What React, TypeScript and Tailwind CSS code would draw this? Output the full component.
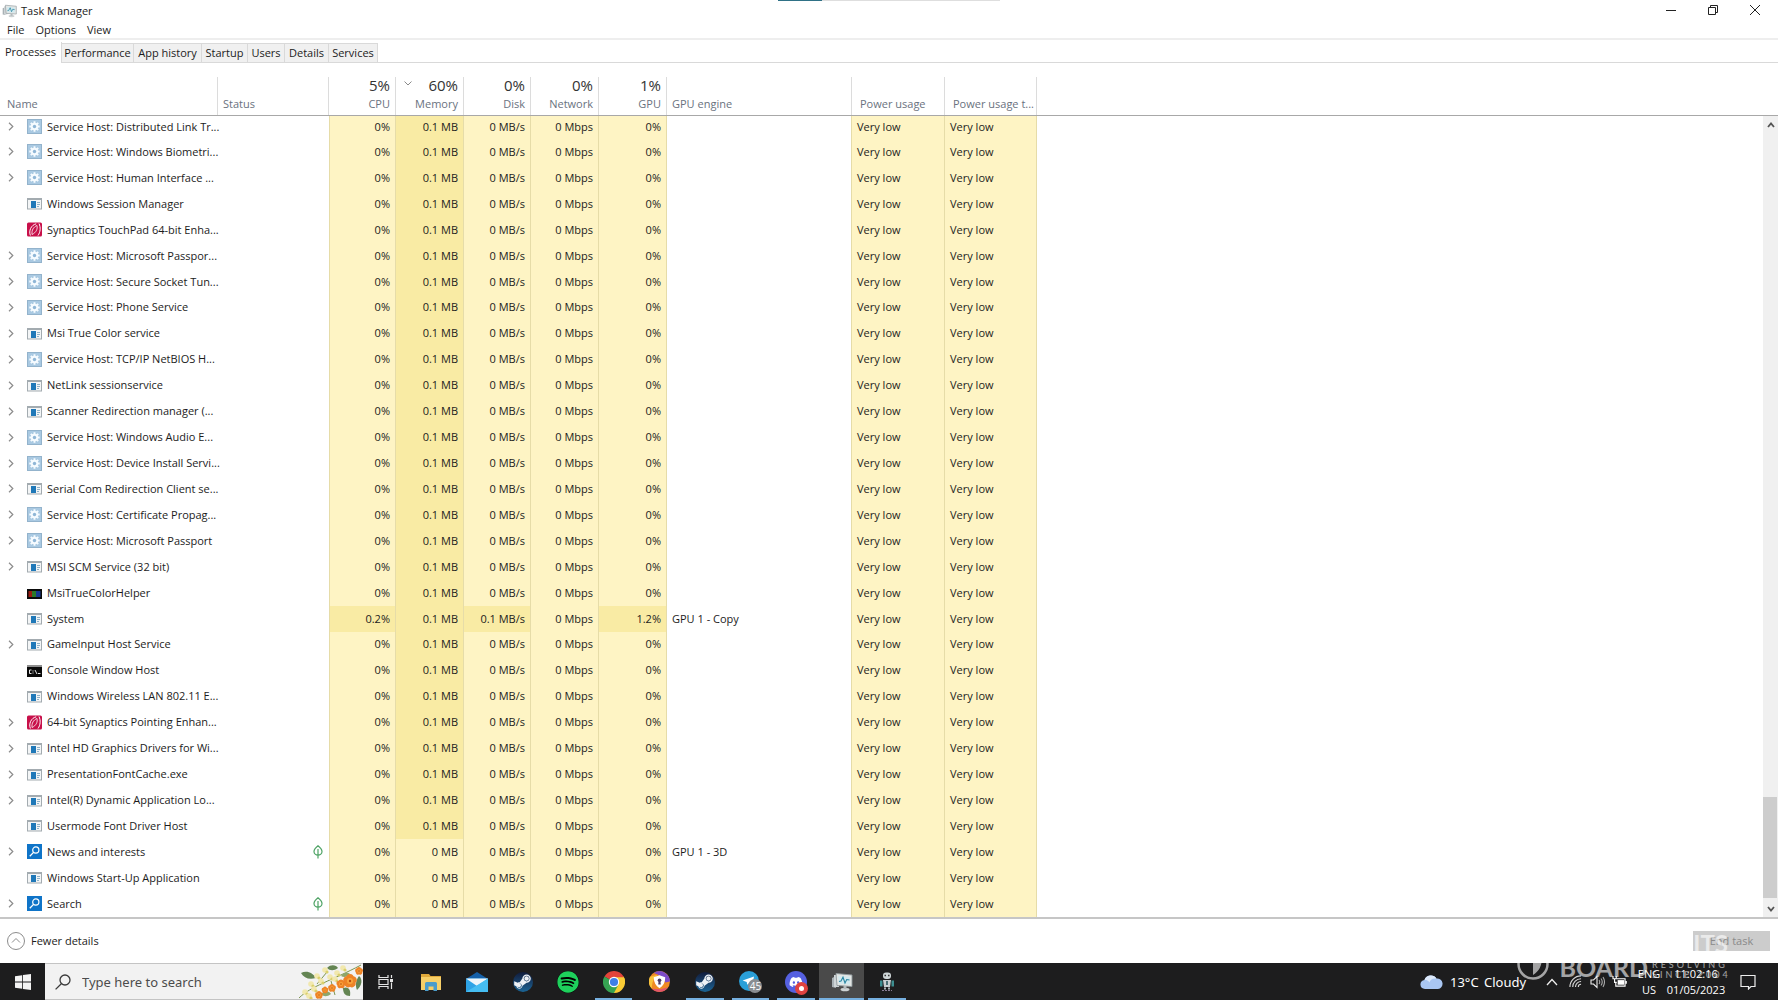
import React from 'react';
import { FaSpotify, FaSteamSymbol, FaDiscord } from 'react-icons/fa';

type IconKind = 'gear' | 'app' | 'syn' | 'rgb' | 'cmd' | 'search';

interface Proc {
  name: string;
  icon: IconKind;
  expand?: boolean;
  leaf?: boolean;
  cpu?: string;
  mem?: string;
  disk?: string;
  gpu?: string;
  engine?: string;
}

const processes: Proc[] = [
  { name: 'Service Host: Distributed Link Tr...', icon: 'gear', expand: true },
  { name: 'Service Host: Windows Biometri...', icon: 'gear', expand: true },
  { name: 'Service Host: Human Interface ...', icon: 'gear', expand: true },
  { name: 'Windows Session Manager', icon: 'app' },
  { name: 'Synaptics TouchPad 64-bit Enha...', icon: 'syn' },
  { name: 'Service Host: Microsoft Passpor...', icon: 'gear', expand: true },
  { name: 'Service Host: Secure Socket Tun...', icon: 'gear', expand: true },
  { name: 'Service Host: Phone Service', icon: 'gear', expand: true },
  { name: 'Msi True Color service', icon: 'app', expand: true },
  { name: 'Service Host: TCP/IP NetBIOS H...', icon: 'gear', expand: true },
  { name: 'NetLink sessionservice', icon: 'app', expand: true },
  { name: 'Scanner Redirection manager (...', icon: 'app', expand: true },
  { name: 'Service Host: Windows Audio E...', icon: 'gear', expand: true },
  { name: 'Service Host: Device Install Servi...', icon: 'gear', expand: true },
  { name: 'Serial Com Redirection Client se...', icon: 'app', expand: true },
  { name: 'Service Host: Certificate Propag...', icon: 'gear', expand: true },
  { name: 'Service Host: Microsoft Passport', icon: 'gear', expand: true },
  { name: 'MSI SCM Service (32 bit)', icon: 'app', expand: true },
  { name: 'MsiTrueColorHelper', icon: 'rgb' },
  { name: 'System', icon: 'app', cpu: '0.2%', disk: '0.1 MB/s', gpu: '1.2%', engine: 'GPU 1 - Copy' },
  { name: 'GameInput Host Service', icon: 'app', expand: true },
  { name: 'Console Window Host', icon: 'cmd' },
  { name: 'Windows Wireless LAN 802.11 E...', icon: 'app' },
  { name: '64-bit Synaptics Pointing Enhan...', icon: 'syn', expand: true },
  { name: 'Intel HD Graphics Drivers for Wi...', icon: 'app', expand: true },
  { name: 'PresentationFontCache.exe', icon: 'app', expand: true },
  { name: 'Intel(R) Dynamic Application Lo...', icon: 'app', expand: true },
  { name: 'Usermode Font Driver Host', icon: 'app' },
  { name: 'News and interests', icon: 'search', expand: true, leaf: true, mem: '0 MB', engine: 'GPU 1 - 3D' },
  { name: 'Windows Start-Up Application', icon: 'app', mem: '0 MB' },
  { name: 'Search', icon: 'search', expand: true, leaf: true, mem: '0 MB' },
];

function ProcIcon({ kind }: { kind: IconKind }) {
  return (
    <svg viewBox="0 0 15 15" className="size-[15px] shrink-0" aria-hidden="true">
      {kind === 'gear' && (
        <>
          <rect x="0.5" y="0.5" width="14" height="14" fill="#a9c9e2" stroke="#93b3cc" />
          <path d="M7.5 2.300v10.400M2.300 7.500h10.400M3.800 3.800l7.400 7.400M11.200 3.800l-7.400 7.400" stroke="#f6fbff" strokeWidth="1.900" />
          <circle cx="7.5" cy="7.5" r="3.700" fill="#f6fbff" />
          <circle cx="7.5" cy="7.5" r="1.700" fill="#8fb6d6" />
        </>
      )}
      {kind === 'app' && (
        <>
          <rect x="0.5" y="2.5" width="14" height="10.5" fill="#f3f5f6" stroke="#a3abb0" />
          <rect x="0" y="2" width="15" height="2" fill="#a3abb0" />
          <rect x="4" y="5" width="5" height="7" fill="#1f78b8" />
          <path d="M10 6.5h3M10 8.5h3M10 10.5h2" stroke="#8eb2c8" />
        </>
      )}
      {kind === 'syn' && (
        <>
          <rect x="0" y="0.5" width="15" height="14" rx="1.5" fill="#c8104a" />
          <path d="M3.400 13.500C1.500 9 4 3 9.200 1.800" fill="none" stroke="#fff" strokeWidth="1" />
          <path d="M5 12.500C4.600 8 6.500 5 10 3.500c.8 3.500-.8 7-5 9z" fill="none" stroke="#fff" strokeWidth="0.800" />
          <path d="M12 1.500c1.800 4 1.500 8.500-1 12" fill="none" stroke="#fff" strokeWidth="1" />
        </>
      )}
      {kind === 'rgb' && (
        <>
          <rect x="0" y="4" width="15" height="10" fill="#0a0a0a" />
          <rect x="1.5" y="6" width="3.5" height="6" fill="#9a1c12" />
          <rect x="5" y="6" width="4" height="6" fill="#2c7a28" />
          <rect x="9" y="6" width="4.5" height="6" fill="#17398f" />
        </>
      )}
      {kind === 'cmd' && (
        <>
          <rect x="0" y="2" width="15" height="12" fill="#0a0a0a" />
          <rect x="0" y="2" width="15" height="2" fill="#8f8f8f" />
          <path d="M4.500 7h-2v3.500h2M6 7.500v1M6 9.500v1M8 7l2 4M11 10.500h2.500" fill="none" stroke="#fff" strokeWidth="0.9" />
        </>
      )}
      {kind === 'search' && (
        <>
          <rect width="15" height="15" fill="#0f74c8" />
          <circle cx="8.8" cy="6" r="3.1" fill="none" stroke="#fff" strokeWidth="1.2" />
          <path d="M6.500 8.400 2.800 12.200" stroke="#fff" strokeWidth="1.3" />
        </>
      )}
    </svg>
  );
}

function Leaf() {
  return (
    <svg viewBox="0 0 10 14" className="h-[14px] w-[10px]" fill="none" stroke="#4ea365" strokeWidth="1.2" role="img" aria-label="Suspended">
      <path d="M5 .8C2.500 2.800 1 4.600 1 6.600a4 3.600 0 0 0 8 0C9 4.600 7.500 2.800 5 .8zM5 4v9.500" />
    </svg>
  );
}

function MonitorIcon({ className }: { className: string }) {
  return (
    <svg viewBox="0 0 22 20" className={className} aria-hidden="true">
      <path d="M1 6l4-2v12l-4-1z" fill="#a9b1b5" />
      <path d="M3 3h5v12H3z" fill="#cfd5d7" />
      <path d="M5 1.500 21 3v11.500L6 13.500z" fill="#e3e6e4" stroke="#8d979b" strokeWidth="0.9" />
      <path d="M7 4l12 .8v7.700L7.800 11.800z" fill="#d3e9ee" />
      <path d="M8 9.500 10 9l2-3.800 2 5.800 1.700-3.500 2.800.5" fill="none" stroke="#2a86a2" strokeWidth="1.1" />
      <ellipse cx="14" cy="17.5" rx="4.5" ry="1.8" fill="#cdd2d3" />
      <path d="M12.500 14h3v3h-3z" fill="#b3babc" />
    </svg>
  );
}

const tabs = [
  ['Performance', 'w-[72px]'],
  ['App history', 'w-[68px]'],
  ['Startup', 'w-[46px]'],
  ['Users', 'w-[37px]'],
  ['Details', 'w-[44px]'],
  ['Services', 'w-[49px]'],
];

const usage = [
  ['5%', 'CPU'],
  ['60%', 'Memory'],
  ['0%', 'Disk'],
  ['0%', 'Network'],
  ['1%', 'GPU'],
];

const th = 'p-0 align-bottom font-normal text-[#6a7280]';
const thInner = 'mt-[14px] flex h-[38px] flex-col justify-end border-r border-[#dcdcdc] pb-[3px]';
const num = 'border-r border-[#e6dca8] p-0 pr-[5px] text-right';
const pale = 'bg-[#fef4c4]';
const warm = 'bg-[#f9eba4]';

function ProcessTable() {
  return (
    <table className="h-full w-full table-fixed border-separate border-spacing-0 text-[11px] leading-4">
      <colgroup>
        <col className="w-[218px]" />
        <col className="w-[111px]" />
        <col className="w-[67px]" />
        <col className="w-[68px]" />
        <col className="w-[67px]" />
        <col className="w-[68px]" />
        <col className="w-[68px]" />
        <col className="w-[185px]" />
        <col className="w-[93px]" />
        <col className="w-[92px]" />
        <col />
      </colgroup>
      <thead>
        <tr className="h-[53px]">
          <th className={`${th} border-b border-[#a8a8a8] text-left`}>
            <div className={`${thInner} pl-[7px]`}>Name</div>
          </th>
          <th className={`${th} border-b border-[#a8a8a8] text-left`}>
            <div className={`${thInner} pl-[5px]`}>Status</div>
          </th>
          {usage.map(([value, label]) => (
            <th key={label} className={`${th} border-b border-[#a8a8a8] text-right`}>
              <div className={`${thInner} relative pr-[5px]`}>
                {label === 'Memory' && (
                  <svg viewBox="0 0 8 5" className="absolute top-[4px] left-[8px] h-[5px] w-[8px]" fill="none" stroke="#8a8a8a" aria-hidden="true">
                    <path d="M.5.5 4 4 7.500.5" />
                  </svg>
                )}
                <span className="mb-px text-[15px] leading-5 text-[#333]">{value}</span>
                <span>{label}</span>
              </div>
            </th>
          ))}
          <th className={`${th} border-b border-[#a8a8a8] text-left`}>
            <div className={`${thInner} pl-[5px]`}>GPU engine</div>
          </th>
          <th className={`${th} border-b border-[#a8a8a8] text-left`}>
            <div className={`${thInner} pl-[8px]`}>Power usage</div>
          </th>
          <th className={`${th} border-b border-[#a8a8a8] text-left`}>
            <div className={`${thInner} whitespace-nowrap pl-[8px]`}>Power usage t...</div>
          </th>
          <td className="border-b border-[#a8a8a8] p-0" />
        </tr>
      </thead>
      <tbody className="text-[#1c1c1c]">
        {processes.map((p, i) => (
          <tr key={p.name} className={i === 0 ? 'h-[23px] [&>td]:pb-[2px]' : ''}>
            <td className="p-0">
              <div className="flex items-center whitespace-nowrap">
                <span className="flex w-[27px] shrink-0 pl-[8px]">
                  {p.expand && (
                    <button type="button" aria-label={`Expand ${p.name}`} className="block">
                      <svg viewBox="0 0 6 9" className="h-[9px] w-[6px]" fill="none" stroke="#8c8c8c" strokeWidth="1.2" aria-hidden="true">
                        <path d="M1 .8 4.800 4.500 1 8.200" />
                      </svg>
                    </button>
                  )}
                </span>
                <ProcIcon kind={p.icon} />
                <span className="ml-[5px]">{p.name}</span>
              </div>
            </td>
            <td className="p-0">
              {p.leaf && (
                <div className="flex justify-end pr-[6px]">
                  <Leaf />
                </div>
              )}
            </td>
            <td className={`${num} border-l ${p.cpu ? warm : pale}`}>{p.cpu ?? '0%'}</td>
            <td className={`${num} ${p.mem ? pale : warm}`}>{p.mem ?? '0.1 MB'}</td>
            <td className={`${num} ${p.disk ? warm : pale}`}>{p.disk ?? '0 MB/s'}</td>
            <td className={`${num} ${pale}`}>0 Mbps</td>
            <td className={`${num} ${p.gpu ? warm : pale}`}>{p.gpu ?? '0%'}</td>
            <td className="border-r border-[#e6dca8] p-0 pl-[5px]">{p.engine}</td>
            <td className={`border-r border-[#e6dca8] p-0 pl-[5px] ${pale}`}>Very low</td>
            <td className={`border-r border-[#e6dca8] p-0 pl-[5px] ${pale}`}>Very low</td>
            <td className="p-0" />
          </tr>
        ))}
      </tbody>
    </table>
  );
}

function Flowers() {
  const orange = [[53, 17, 6], [62, 7, 3.5], [35, 24, 3.5], [44, 20, 4], [22, 31, 3.5], [28, 26, 3]];
  const cream = [[20, 12], [28, 6], [14, 20], [24, 17], [33, 13], [8, 28], [40, 9], [46, 4], [17, 25], [38, 15], [12, 32]];
  return (
    <svg viewBox="0 0 66 35" className="h-full w-[66px]" aria-hidden="true">
      <path d="M2 34C14 22 34 17 64 1M20 20l10-12M34 17l4 14" stroke="#7d9650" fill="none" />
      <path d="M4 9c6-3 12 0 15 5C12 16 7 14 4 9zM46 24c6-2 8 2 7 8-5 0-7-3-7-8zM62 12c4 3 3 10-2 14-2-5-1-10 2-14zM30 4c4-4 9-3 11 0-4 3-8 3-11 0z" fill="#648553" />
      <path d="M24 30c4-4 8-3 10 0-4 3-7 3-10 0zM44 12c3-4 7-4 9-2-2 3-6 4-9 2z" fill="#8ea66c" />
      {cream.map(([x, y], i) => (
        <g key={i}>
          <circle cx={x} cy={y} r="2.8" fill="#f1e8ae" />
          <circle cx={x + 2} cy={y + 2} r="1.6" fill="#d9cf6c" />
        </g>
      ))}
      {orange.map(([x, y, r], i) => (
        <g key={i}>
          {[0, 72, 144, 216, 288].map((a) => (
            <circle key={a} cx={x} cy={y - r * 0.55} r={r * 0.6} fill="#ee8326" transform={`rotate(${a} ${x} ${y})`} />
          ))}
          <circle cx={x} cy={y} r={r * 0.5} fill="#f9a53c" />
          <circle cx={x} cy={y} r={r * 0.2} fill="#b8470d" />
        </g>
      ))}
    </svg>
  );
}

function Steam() {
  return (
    <span className="flex size-[20px] items-center justify-center rounded-full bg-linear-to-b from-[#101c3c] to-[#1a6596]">
      <FaSteamSymbol className="size-[19px] text-[#eef2f6]" />
    </span>
  );
}

const taskIcons: { label: string; line?: boolean; active?: boolean; icon: React.ReactNode }[] = [
  {
    label: 'Task View',
    icon: (
      <svg viewBox="0 0 16 14" className="h-[14px] w-[16px]" fill="none" stroke="#e4e4e4" strokeWidth="1.2">
        <path d="M1 0v2.500h9V0M1 14v-2.500h9V14M1 4.500h9v5H1zM13.500 0v3M13.500 7.500V14" />
        <path d="M12 4h3v3h-3z" fill="#e4e4e4" stroke="none" />
      </svg>
    ),
  },
  {
    label: 'File Explorer',
    icon: (
      <svg viewBox="0 0 20 18" className="h-[18px] w-[20px]">
        <path d="M0 1h8l1.500 2H20v14H0z" fill="#e0a93b" />
        <path d="M0 4h20v13H0z" fill="#f6cf68" />
        <path d="M4 18v-7.500q0-1.500 1.500-1.500h9q1.500 0 1.500 1.500V18h-3.500v-4.500h-5V18z" fill="#4a9ccb" />
      </svg>
    ),
  },
  {
    label: 'Mail',
    icon: (
      <svg viewBox="0 0 22 20" className="h-[20px] w-[22px]">
        <path d="M0 7 11 0l11 7v4H0z" fill="#1560a8" />
        <path d="M0 6.500h22V20H0z" fill="#2ea3e6" />
        <path d="M0 6.500h22L11 14z" fill="#eef5fa" />
        <path d="M0 20 22 6.500V20z" fill="#45bdf2" />
      </svg>
    ),
  },
  { label: 'Steam', icon: <Steam /> },
  {
    label: 'Spotify',
    icon: (
      <span className="rounded-full bg-black">
        <FaSpotify className="size-[22px] text-[#1ed05c]" />
      </span>
    ),
  },
  {
    label: 'Google Chrome',
    line: true,
    icon: (
      <svg viewBox="0 0 22 22" className="size-[22px]">
        <path d="M11 11 1.470 5.500A11 11 0 0 1 20.530 5.500z" fill="#e2443a" />
        <path d="M11 11 20.530 5.500A11 11 0 0 1 11 22z" fill="#f9cb35" />
        <path d="M11 11V22A11 11 0 0 1 1.470 5.500z" fill="#36a352" />
        <path d="M11 6h9.800q1 2 1 4H11z" fill="#f9cb35" />
        <path d="M1.470 5.500h19.060l.3.700H11z" fill="#e2443a" />
        <path d="M15.500 13.500 11 22l-1.500-.1L11 15z" fill="#36a352" />
        <circle cx="11" cy="11" r="5.2" fill="#fff" />
        <circle cx="11" cy="11" r="4.1" fill="#3f7fe8" />
      </svg>
    ),
  },
  {
    label: 'Secure Browser',
    icon: (
      <svg viewBox="0 0 22 22" className="size-[21px]">
        <circle cx="11" cy="11" r="11" fill="#f08a24" />
        <path d="M5 2a11 11 0 0 1 17 9l-5 1C16 7 11 4 5 2z" fill="#7d4cc9" />
        <path d="M1 6a11 11 0 0 0 2 12.500C3 12 5 7 9 4z" fill="#f7c23c" />
        <path d="M3 18.500A11 11 0 0 0 20 17L12 19z" fill="#e2556b" />
        <path d="M11 4.500 17 6.500c0 5-2 9-6 11.500-4-2.500-6-6.500-6-11.500z" fill="#fff" />
        <circle cx="11" cy="9.8" r="1.9" fill="#4b3a64" />
        <path d="M10.200 10h1.600l.6 4.200h-2.800z" fill="#4b3a64" />
      </svg>
    ),
  },
  { label: 'Steam library', line: true, icon: <Steam /> },
  {
    label: 'Telegram, 45 unread',
    line: true,
    icon: (
      <span className="relative block size-[22px]">
        <svg viewBox="0 0 22 22" className="size-[20px]">
          <circle cx="11" cy="11" r="11" fill="#2a9fd8" />
          <path d="M4 10.500 16.500 6l-2 10-3.500-2.500L9 15l-.5-3z" fill="#fff" />
        </svg>
        <span className="absolute top-[8px] left-[9px] flex size-[14px] items-center justify-center rounded-full bg-[#8a8d91] text-[10px] leading-none text-white">45</span>
      </span>
    ),
  },
  {
    label: 'Discord',
    line: true,
    icon: (
      <span className="relative flex size-[22px] items-center justify-center rounded-full bg-[#5560e0]">
        <FaDiscord className="size-[14px] text-white" />
        <span className="absolute top-[11px] left-[10px] flex size-[13px] items-center justify-center rounded-full bg-[#e0423f]">
          <span className="size-[5px] rounded-full bg-white" />
        </span>
      </span>
    ),
  },
  { label: 'Task Manager', line: true, active: true, icon: <MonitorIcon className="h-[20px] w-[22px]" /> },
  {
    label: 'Assistant',
    line: true,
    icon: (
      <svg viewBox="0 0 16 20" className="h-[20px] w-[16px]">
        <rect x="4" y="0.5" width="8" height="6.5" rx="3" fill="#cfd6d8" />
        <path d="M5.500 3.500h1.500M9 3.500h1.500" stroke="#333" strokeWidth="1.4" />
        <path d="M4 8h8l-1 7H5z" fill="#c9cfd1" />
        <path d="M1 8.500h2.500v6H1zM12.500 8.500H15v6h-2.500z" fill="#3d8e90" />
        <path d="M7 9h2v4H7z" fill="#4b6e74" />
        <path d="M5 15.500h2v2H5zM9 15.500h2v2H9z" fill="#aab3b6" />
        <path d="M3 18.500h10" stroke="#8a7d96" strokeDasharray="2 1" />
      </svg>
    ),
  },
];

function Taskbar() {
  return (
    <footer className="relative flex h-[37px] shrink-0 items-stretch overflow-hidden bg-[#1d1d1e] text-white">
      <button type="button" aria-label="Start" className="flex w-[45px] items-center justify-center">
        <svg viewBox="0 0 16 16" className="size-[16px]" fill="#f4f4f4" aria-hidden="true">
          <path d="M0 2.200 7.200 1.200v6.400H0zM8 1.100 16 0v7.600H8zM0 8.400h7.200v6.400L0 13.800zM8 8.400h8V16L8 14.900z" />
        </svg>
      </button>
      <label className="flex w-[318px] items-center border-y border-[#c4c4c4] bg-[#f2f2f2] pl-[10px]">
        <svg viewBox="0 0 16 16" className="size-[16px] shrink-0" fill="none" stroke="#3a3a3a" strokeWidth="1.3" aria-hidden="true">
          <circle cx="10" cy="6" r="5" />
          <path d="M6.300 9.700.6 15.400" />
        </svg>
        <input type="text" placeholder="Type here to search" aria-label="Search" className="ml-[11px] min-w-0 flex-1 bg-transparent font-['Noto_Sans',sans-serif] text-[13px] outline-none placeholder:text-[#4c4c4c]" />
        <Flowers />
      </label>
      <nav className="grid w-[547px] grid-cols-12">
        {taskIcons.map((t) => (
          <button key={t.label} type="button" aria-label={t.label} className={`relative flex items-center justify-center ${t.active ? 'bg-[#4a4a4a]' : ''}`}>
            {t.icon}
            {t.line && <span className={`absolute bottom-0 h-[2px] bg-[#76b0e0] ${t.active ? 'inset-x-0' : 'inset-x-[4px]'}`} />}
          </button>
        ))}
      </nav>
      <div className="ml-auto flex items-center">
        <button type="button" className="flex items-center font-['Noto_Sans',sans-serif] text-[13px] whitespace-nowrap">
          <svg viewBox="0 0 23 15" className="mr-[7px] h-[15px] w-[23px]" aria-hidden="true">
            <path d="M5 15a5 4.500 0 0 1-.5-8.900A6.500 6 0 0 1 16.500 4.500 5.300 5.300 0 0 1 18 15z" fill="#a9c6f2" />
            <path d="M4.500 6.100A6.500 6 0 0 1 16.500 4.500C12 4 10 6 9.500 8.500 8 6.500 6.500 6 4.500 6.100z" fill="#dce9fb" />
          </svg>
          <span className="w-[34px] text-left">13°C</span>
          <span className="w-[55px] text-left">Cloudy</span>
        </button>
        <button type="button" aria-label="Show hidden icons" className="ml-[7px]">
          <svg viewBox="0 0 12 8" className="h-[8px] w-[12px]" fill="none" stroke="#eee" strokeWidth="1.3">
            <path d="M1 7l5-5.500L11 7" />
          </svg>
        </button>
        <button type="button" aria-label="Network" className="ml-[11px]">
          <svg viewBox="0 0 14 14" className="size-[13px]" fill="none" stroke="#d8d8d8" strokeWidth="1.2">
            <path d="M1 13A12 12 0 0 1 13 1M4 13A9 9 0 0 1 13 4M7 13a6 6 0 0 1 6-6M10 13a3 3 0 0 1 3-3" />
          </svg>
        </button>
        <button type="button" aria-label="Volume" className="ml-[8px]">
          <svg viewBox="0 0 15 14" className="h-[14px] w-[15px]" fill="none" stroke="#eee" strokeWidth="1.1">
            <path d="M1 5h2.500L7 1.500v11L3.500 9H1z" />
            <path d="M9 5q1.500 2 0 4M11 3.500q2.500 3.500 0 7M13 2q3 5 0 10" stroke="#a9a9a9" />
          </svg>
        </button>
        <button type="button" aria-label="Battery" className="ml-[7px]">
          <svg viewBox="0 0 16 14" className="h-[13px] w-[15px]" fill="none" stroke="#fff" strokeWidth="1.2">
            <path d="M5 4h9v8H4V8M15.300 6.500v3" />
            <path d="M6 5.500h7v5H6z" fill="#fff" stroke="none" />
            <path d="M1 1v3h3.500V1M2.700 4v4H5" />
          </svg>
        </button>
        <div className="ml-[6px] flex w-[32px] flex-col items-center text-[11px] leading-4">
          <span>ENG</span>
          <span>US</span>
        </div>
        <div className="ml-[1px] flex w-[60px] flex-col items-center text-[11px] leading-4">
          <span>11:02:16</span>
          <span>01/05/2023</span>
        </div>
        <button type="button" aria-label="Notifications" className="mr-[22px] ml-[14px]">
          <svg viewBox="0 0 16 16" className="size-[16px]" fill="none" stroke="#eee" strokeWidth="1.2">
            <path d="M1 1.500h14v11h-4L8.500 15V12.500H1z" />
          </svg>
        </button>
      </div>
    </footer>
  );
}

function Watermark() {
  return (
    <div className="pointer-events-none absolute right-[48px] bottom-[20px] flex items-end font-['Lato',sans-serif] leading-none text-white opacity-60" aria-hidden="true">
      <svg viewBox="0 0 32 32" className="mr-[10px] size-[32px]">
        <circle cx="16" cy="16" r="14.5" fill="none" stroke="#fff" strokeWidth="2.5" />
        <path d="M16 4c3 3 6 4 9 5 0 9-3 14-9 18z" fill="#fff" />
      </svg>
      <span className="text-[25px] font-bold">BOARD</span>
      <span className="ml-[4px] flex w-[78px] flex-col items-start whitespace-nowrap">
        <span className="mr-[2px] mb-[4px] self-end text-[24px] font-bold">ITS</span>
        <span className="text-[9px] leading-[10px] tracking-[3px]">RESOLVING</span>
        <span className="text-[9px] leading-[10px] tracking-[3px]">SINCE 2004</span>
      </span>
    </div>
  );
}

export default function App() {
  return (
    <div className="relative flex h-screen flex-col overflow-hidden bg-white font-['Open_Sans',sans-serif] text-[11px] leading-4 text-[#1c1c1c]">
      <div className="absolute top-0 left-[43.75%] flex h-px w-[222px] bg-[#dedede]">
        <span className="w-[44px] bg-[#2f7186]" />
      </div>
      <header className="flex h-[22px] shrink-0 items-center pl-[2px]">
        <MonitorIcon className="mr-[4px] h-[14px] w-[15px]" />
        <h1>Task Manager</h1>
        <div className="ml-auto flex items-center pr-[18px] pb-[2px]">
          <button type="button" aria-label="Minimize" className="mr-[32px]">
            <svg viewBox="0 0 10 10" className="size-[10px]" stroke="#222"><path d="M0 5.500h10" /></svg>
          </button>
          <button type="button" aria-label="Restore" className="mr-[32px]">
            <svg viewBox="0 0 10 10" className="size-[10px]" fill="none" stroke="#222"><path d="M.5 2.500h7v7h-7zM2.500 2.500v-2h7v7h-2" /></svg>
          </button>
          <button type="button" aria-label="Close">
            <svg viewBox="0 0 10 10" className="size-[10px]" stroke="#222"><path d="M0 0l10 10M10 0 0 10" /></svg>
          </button>
        </div>
      </header>
      <nav className="flex h-[18px] shrink-0 items-center gap-[11px] border-b-2 border-[#eeeeee] pl-[7px]">
        <button type="button">File</button>
        <button type="button">Options</button>
        <button type="button">View</button>
      </nav>
      <div role="tablist" className="flex h-[23px] shrink-0 items-end border-b border-[#d9d9d9]">
        <button type="button" role="tab" aria-selected="true" className="-mb-px flex h-[21px] w-[62px] items-center justify-center border-r border-[#d9d9d9] bg-white pb-px">
          Processes
        </button>
        {tabs.map(([label, width]) => (
          <button key={label} type="button" role="tab" aria-selected="false" className={`${width} flex h-[19px] items-center justify-center border-t border-r border-[#d9d9d9] bg-[#f0f0f0] whitespace-nowrap`}>
            {label}
          </button>
        ))}
      </div>
      <main className="relative flex min-h-0 flex-1 border-b-2 border-[#c6c6c6]">
        <div className="min-w-0 flex-1">
          <ProcessTable />
        </div>
        <div className="mt-[52px] flex w-[15px] shrink-0 flex-col border-t border-[#a8a8a8] bg-[#f0f0f0]">
          <button type="button" aria-label="Scroll up" className="flex h-[17px] items-center justify-center">
            <svg viewBox="0 0 8 6" className="h-[6px] w-[8px]" fill="none" stroke="#555" strokeWidth="1.8"><path d="M1 5l3-3.500L7 5" /></svg>
          </button>
          <div className="flex-1" />
          <div className="h-[101px] w-[14px] bg-[#cdcdcd]" />
          <button type="button" aria-label="Scroll down" className="flex h-[19px] items-center justify-center pt-[3px]">
            <svg viewBox="0 0 8 6" className="h-[6px] w-[8px]" fill="none" stroke="#555" strokeWidth="1.8"><path d="M1 1l3 3.500L7 1" /></svg>
          </button>
        </div>
      </main>
      <div className="flex h-[44px] shrink-0 items-center pr-[8px] pl-[7px]">
        <button type="button" className="flex items-center">
          <svg viewBox="0 0 18 18" className="mr-[6px] size-[18px]" fill="none" stroke="#8c8c8c" aria-hidden="true">
            <circle cx="9" cy="9" r="8.5" />
            <path d="M5 10.500l4-4 4 4" />
          </svg>
          Fewer details
        </button>
        <button type="button" disabled className="ml-auto flex h-[20px] w-[77px] items-center justify-center bg-[#cccccc] text-[#8a8a8a]">
          End task
        </button>
      </div>
      <Taskbar />
      <Watermark />
    </div>
  );
}
